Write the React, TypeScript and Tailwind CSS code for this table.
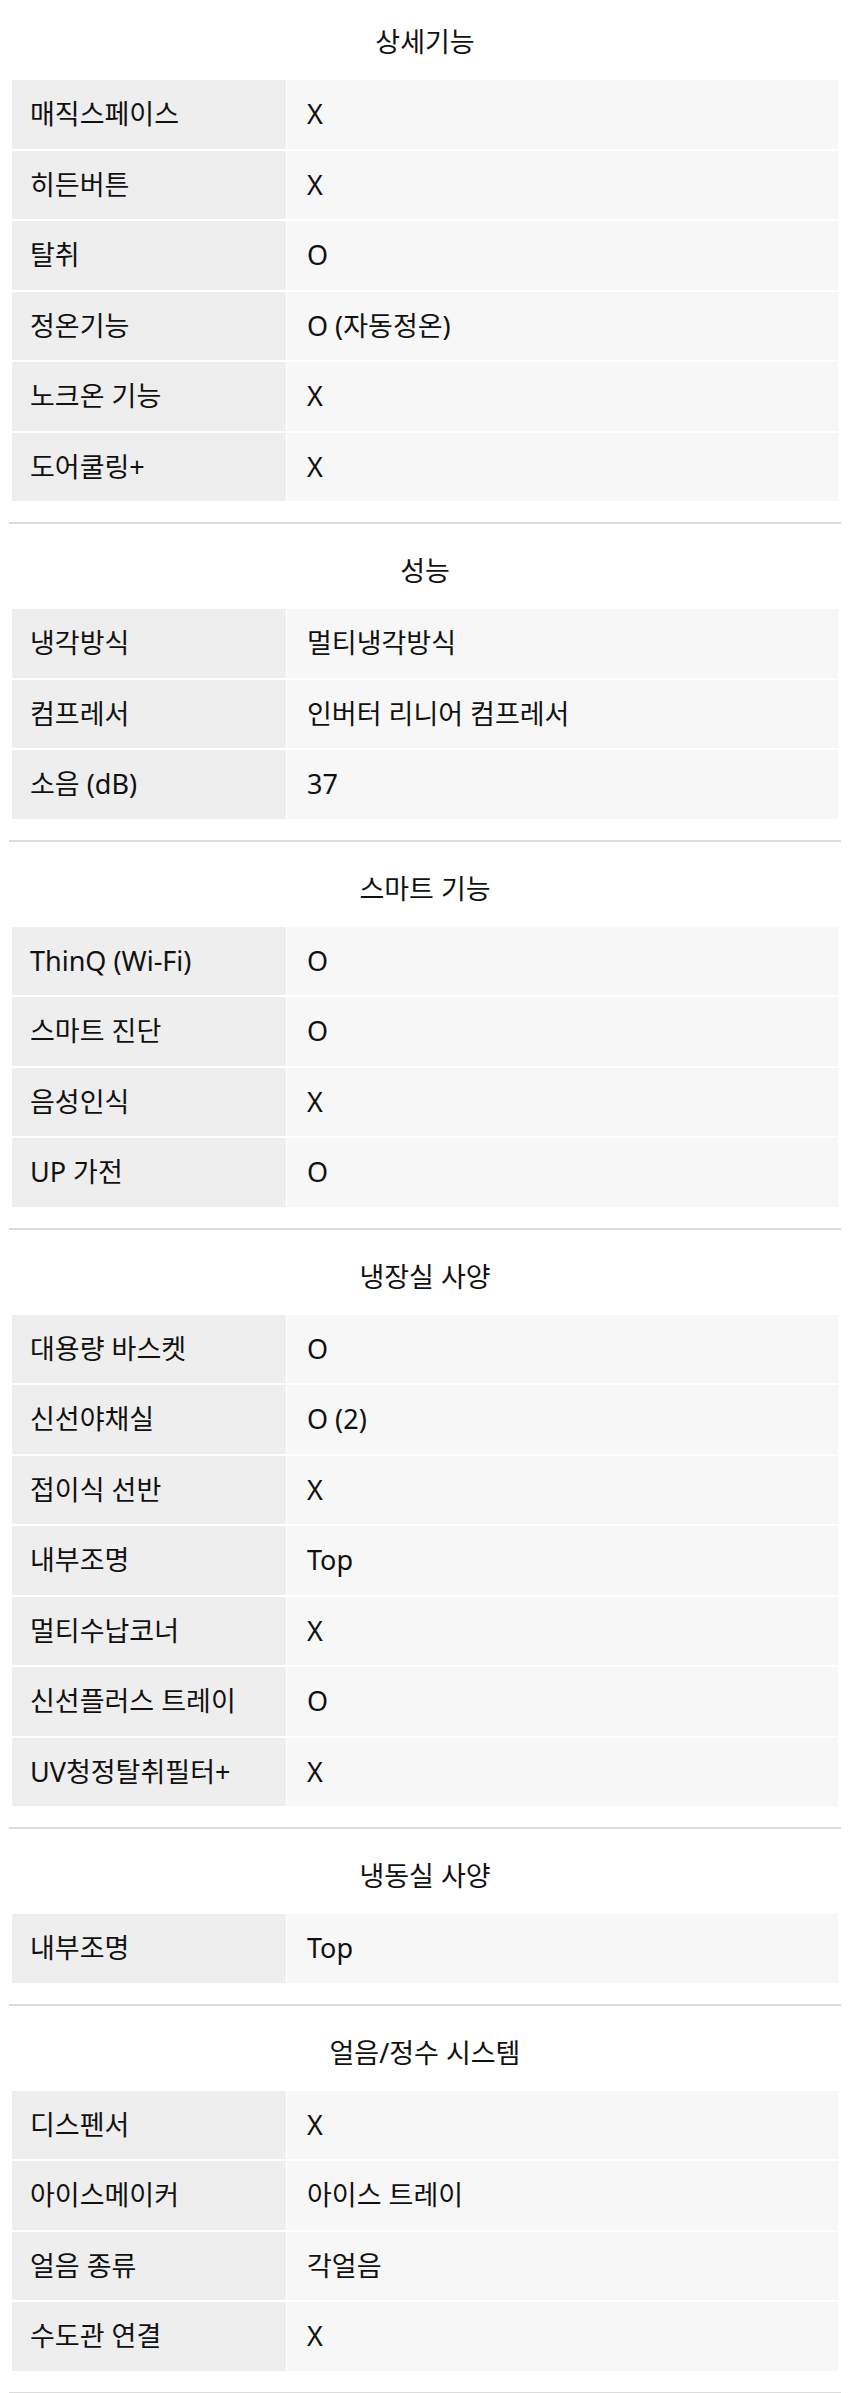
type Spec = { label: string; value: string };

type Section = { title: string; rows: Spec[] };

const sections: Section[] = [
  {
    title: "상세기능",
    rows: [
      { label: "매직스페이스", value: "X" },
      { label: "히든버튼", value: "X" },
      { label: "탈취", value: "O" },
      { label: "정온기능", value: "O (자동정온)" },
      { label: "노크온 기능", value: "X" },
      { label: "도어쿨링+", value: "X" },
    ],
  },
  {
    title: "성능",
    rows: [
      { label: "냉각방식", value: "멀티냉각방식" },
      { label: "컴프레서", value: "인버터 리니어 컴프레서" },
      { label: "소음 (dB)", value: "37" },
    ],
  },
  {
    title: "스마트 기능",
    rows: [
      { label: "ThinQ (Wi-Fi)", value: "O" },
      { label: "스마트 진단", value: "O" },
      { label: "음성인식", value: "X" },
      { label: "UP 가전", value: "O" },
    ],
  },
  {
    title: "냉장실 사양",
    rows: [
      { label: "대용량 바스켓", value: "O" },
      { label: "신선야채실", value: "O (2)" },
      { label: "접이식 선반", value: "X" },
      { label: "내부조명", value: "Top" },
      { label: "멀티수납코너", value: "X" },
      { label: "신선플러스 트레이", value: "O" },
      { label: "UV청정탈취필터+", value: "X" },
    ],
  },
  {
    title: "냉동실 사양",
    rows: [{ label: "내부조명", value: "Top" }],
  },
  {
    title: "얼음/정수 시스템",
    rows: [
      { label: "디스펜서", value: "X" },
      { label: "아이스메이커", value: "아이스 트레이" },
      { label: "얼음 종류", value: "각얼음" },
      { label: "수도관 연결", value: "X" },
    ],
  },
];

function SpecTable({ rows }: { rows: Spec[] }) {
  return (
    <div className="mx-[3px] flex flex-col gap-y-[2px]">
      {rows.map((row, i) => (
        <div key={i} className="flex h-[68.5px] gap-x-[1px]">
          <div className="flex w-[274px] shrink-0 items-center bg-[#eeeeee] pl-[18px]">
            {row.label}
          </div>
          <div className="flex flex-1 items-center bg-[#f7f7f7] pl-[20px]">
            {row.value}
          </div>
        </div>
      ))}
    </div>
  );
}

export default function App() {
  return (
    <div
      className="min-h-screen bg-white px-[9px] text-[27px] text-[#111]"
      style={{ fontFamily: '"Noto Sans", "Noto Sans CJK KR", sans-serif' }}
    >
      {sections.map((section, i) => (
        <section
          key={section.title}
          className={
            i === 0
              ? "pt-[24px] pb-[21px]"
              : "border-t-2 border-[#dcdcdc] pt-[29px] pb-[21px]"
          }
        >
          <h2 className="mb-[20px] text-center leading-[36px]">{section.title}</h2>
          <SpecTable rows={section.rows} />
        </section>
      ))}
      <div className="border-t-2 border-[#dcdcdc]" />
    </div>
  );
}
